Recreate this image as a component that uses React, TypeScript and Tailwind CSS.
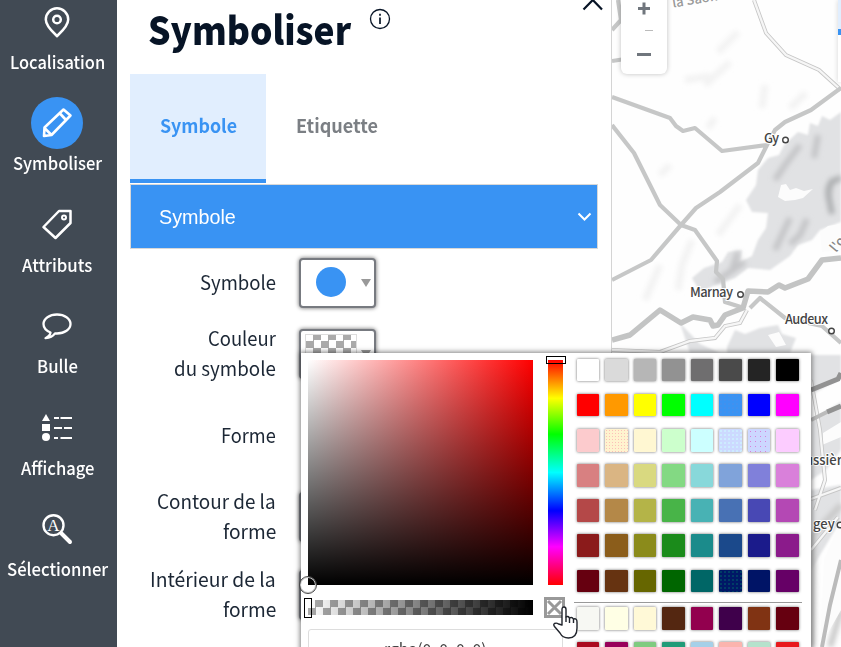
import { useLayoutEffect, useRef, useState } from "react";
import type { ReactNode } from "react";

/* Condenses or widens a line of text so that it takes up the given width. */
function Fit({ width, children }: { width: number; children: ReactNode }) {
  const ref = useRef<HTMLSpanElement>(null);
  const [scale, setScale] = useState(1);
  useLayoutEffect(() => {
    if (ref.current) setScale(width / ref.current.offsetWidth);
  }, [width]);
  return (
    <span className="inline-block whitespace-nowrap" style={{ width }}>
      <span ref={ref} className="inline-block origin-left" style={{ transform: `scaleX(${scale})` }}>
        {children}
      </span>
    </span>
  );
}

const PinIcon = () => (
  <svg width="30" height="32" viewBox="0 0 30 32" fill="none" stroke="#fff" strokeWidth="2.500">
    <path d="M15 30C12 27 3.800 20.500 3.800 13.500a11.200 11.200 0 0 1 22.400 0C26.200 20.500 18 27 15 30Z" />
    <circle cx="15" cy="13.500" r="3.800" />
  </svg>
);
const PencilIcon = () => (
  <svg width="32" height="32" viewBox="0 0 32 32" fill="none" stroke="#fff" strokeWidth="2.600" strokeLinejoin="round">
    <path d="M3 29 3.500 20.500 22.500 2.500 29.500 8.500 10.500 28Z M18.500 6l6.500 7 M4 21.500l6 6" />
    <path d="M2 30v-5l4 4.500Z" fill="#fff" stroke="none" />
  </svg>
);
const TagIcon = () => (
  <svg width="32" height="32" viewBox="0 0 32 32" fill="none" stroke="#fff" strokeWidth="2.500" strokeLinejoin="round">
    <path d="M18 2h11.500v12L14.500 29 2.500 18Z" />
    <circle cx="23" cy="8.500" r="2" strokeWidth="2" />
  </svg>
);
const BubbleIcon = () => (
  <svg width="32" height="32" viewBox="0 0 32 32" fill="none" stroke="#fff" strokeWidth="2.300" strokeLinejoin="round">
    <path d="M9.500 22.500C5 20.600 2.500 17.500 2.500 14 2.500 8.500 8.500 4.500 16 4.500S29.500 8.500 29.500 14 23.500 23.500 16 23.500q-1 0-2-.2Q11 27.500 4.500 28.200 9 26 9.500 22.500Z" />
  </svg>
);
const LegendIcon = () => (
  <svg width="32" height="32" viewBox="0 0 32 32" fill="#fff">
    <path d="M5 2 9 9H1Z" />
    <path d="M1 12h8v7H1z" />
    <circle cx="5" cy="25" r="4" />
    <path d="M13 5h5v2h-5z M19.500 5H31v2H19.500z M13 15h8v2h-8z M23 15h8v2h-8z M13 25h4v2h-4z M19.500 25H31v2H19.500z" />
  </svg>
);
const SearchIcon = () => (
  <svg width="32" height="32" viewBox="0 0 32 32" fill="none" stroke="#fff">
    <circle cx="12.500" cy="12.200" r="10" strokeWidth="2.400" />
    <path d="M20.500 20.500 29 29" strokeWidth="4" strokeLinecap="round" />
    <text x="12.500" y="17.500" textAnchor="middle" fill="#fff" stroke="none" className="font-['Liberation_Serif',serif] text-[17px]">A</text>
  </svg>
);

const menu = [
  { label: "Localisation", width: 95, icon: <PinIcon /> },
  { label: "Symboliser", width: 89, icon: <PencilIcon />, active: true },
  { label: "Attributs", width: 70, icon: <TagIcon /> },
  { label: "Bulle", width: 41, icon: <BubbleIcon /> },
  { label: "Affichage", width: 73, icon: <LegendIcon /> },
  { label: "Sélectionner", width: 101, icon: <SearchIcon /> },
];

function Sidebar() {
  return (
    <nav className="-mt-1 flex h-[651px] w-[117px] shrink-0 flex-col gap-[21.400px] bg-[#414a54] pr-[3px] text-white">
      {menu.map((m) => (
        <div key={m.label} className="flex flex-col items-center">
          <div className={`flex size-[52px] items-center justify-center rounded-full ${m.active ? "bg-[#3993f3]" : ""}`}>{m.icon}</div>
          <div className="h-7 text-[17.500px] leading-7 font-medium">
            <Fit width={m.width}>{m.label}</Fit>
          </div>
        </div>
      ))}
    </nav>
  );
}

const Arrow = () => <span className="h-0 w-0 border-x-[5px] border-t-[8px] border-x-transparent border-t-[#999]" />;

const boxStyle = "h-[50px] w-[77px] rounded-[4px] border-2 border-[#777a80] bg-white shadow-[0_0_4px_rgba(0,0,0,0.6)]";

function Row({ lines, className, children }: { lines: [string, number][]; className: string; children?: ReactNode }) {
  return (
    <div className={`flex items-center ${className}`}>
      <div className="flex w-[146px] flex-col items-end pb-[3px] text-[19.500px] leading-[29.500px] text-[#1c2735]">
        {lines.map(([t, w]) => (
          <Fit key={t} width={w}>{t}</Fit>
        ))}
      </div>
      <div className="ml-[23px]">{children}</div>
    </div>
  );
}

function Panel() {
  return (
    <main className="flex h-[647px] w-[495px] shrink-0 flex-col border-r border-[#d4d4d4] bg-white pl-[13px]">
      <header className="flex h-[74px] items-start pl-[18px]">
        <h1 className="text-[39px] leading-[56px] font-black text-[#071426]">
          <Fit width={203}>Symboliser</Fit>
        </h1>
        <svg className="mt-2 ml-[18px]" width="22" height="22" viewBox="0 0 22 22" fill="none" stroke="#071426">
          <circle cx="11" cy="11" r="9.500" strokeWidth="1.300" />
          <path d="M11 9.500v6.500M11 5.800v2" strokeWidth="1.700" />
        </svg>
        <svg className="ml-[191px]" width="22" height="12" viewBox="0 0 22 12" fill="none" stroke="#071426" strokeWidth="2.200">
          <path d="M1.500 9.500 10.800 0 20 9.500" />
        </svg>
      </header>
      <div className="flex h-[110px] text-[18.500px] font-semibold">
        <div className="flex h-[109px] w-[136px] items-center justify-center border-b-4 border-[#3993f3] bg-[#e1eefe] pb-[2px] text-[#3993f3]">
          <Fit width={77}>Symbole</Fit>
        </div>
        <div className="flex h-[105px] items-center pb-[2px] pl-[30px] text-[#7b7f84]">
          <Fit width={82}>Etiquette</Fit>
        </div>
      </div>
      <div className="flex h-[65px] w-[468px] shrink-0 items-center justify-between border border-[#d8d8d8] bg-[#3993f3] pr-[5px] pl-7 font-['Liberation_Sans',sans-serif] text-[20px] text-white">
        <Fit width={77}>Symbole</Fit>
        <svg width="15" height="10" viewBox="0 0 15 10" fill="none" stroke="#fff" strokeWidth="2">
          <path d="m1.500 1.500 6 6 6-6" />
        </svg>
      </div>
      <Row lines={[["Symbole", 76]]} className="mt-[9px] h-[50px]">
        <div className={`flex items-center pr-[3px] pl-[14.500px] ${boxStyle}`}>
          <span className="mr-auto mb-[3px] size-[30px] rounded-full bg-[#3993f3]" />
          <Arrow />
        </div>
      </Row>
      <Row lines={[["Couleur", 68], ["du symbole", 102]]} className="mt-[16px] h-[60px]">
        <div className={`flex items-center justify-between pr-[3px] pl-[4px] ${boxStyle}`}>
          <span className="h-10 w-[52px] border border-[#ddd] bg-[conic-gradient(#aaa_25%,#fff_0_50%,#aaa_0_75%,#fff_0)] bg-[length:15px_15px] bg-[position:0_-2px]" />
          <Arrow />
        </div>
      </Row>
      <Row lines={[["Forme", 55]]} className="mt-[35px] h-[34px]" />
      <Row lines={[["Contour de la", 119], ["forme", 53]]} className="mt-[33px] h-[62px]">
        <div className={boxStyle} />
      </Row>
      <Row lines={[["Intérieur de la", 126], ["forme", 53]]} className="mt-[16px] h-[62px]">
        <div className={boxStyle} />
      </Row>
    </main>
  );
}

const road = "M612 97 670 118 676 126 683 131 695 128 722 151 767 145 775 130 785 122 811 110 841 88 M612 125 634 153 655 195 660 205 681 225 695 230 717 261 716 272 723 279 725 302 744 308 M767 145 758 163 720 192 696 208 681 225 651 260 612 280 M750 308 760 298 785 318 822 326 841 343 M612 30 621 20 618 0 M612 61 625 59";
const mainRoad = "M612 340 630 335 660 310 681 323 693 317 710 320 713 326 718 325 725 315 743 308 748 291 768 292 779 285 785 288 808 279 822 260 841 258";
const lane = "M754 0 766 33 786 55 819 70 841 90 M612 350 660 352 690 341 715 338 725 326 740 323 747 310 M811 380 820 430 825 480 815 510 M811 499 841 488 M838 517 811 550";

function MapView() {
  return (
    <div className="relative h-[647px] w-[229px] shrink-0 overflow-hidden bg-[#fefefe]">
      <svg width="229" height="647" viewBox="612 0 229 647" fill="none">
        <defs>
          <filter id="relief" x="-10%" y="-10%" width="120%" height="120%"><feGaussianBlur stdDeviation="1.200" /></filter>
          <filter id="slope" x="-20%" y="-20%" width="140%" height="140%"><feGaussianBlur stdDeviation="2.500" /></filter>
        </defs>
        <g filter="url(#relief)" fill="#e1e2e4">
          <path d="M841 112 830 120 822 116 818 126 810 123 808 135 798 132 784 145 779 155 768 158 758 170 756 185 746 200 752 212 768 213 766 228 758 240 752 256 740 262 742 250 728 252 722 262 704 268 692 278 700 292 718 284 735 278 748 268 770 270 790 256 798 245 812 240 820 230 841 222Z" />
          <path d="M727 347 735 330 745 334 760 328 778 325 782 334 796 338 790 353H727Z M680 323 690 353H720L700 344Z M811 355H841V378L811 395Z M811 420 841 402V450L826 470 811 480Z M811 490 841 485V520L811 570Z" />
        </g>
        <g filter="url(#slope)">
          <path d="M800 145 785 165 775 180 M790 218 782 235 775 250 M807 219 800 235 790 244 M832 178 828 200 M818 135 814 158 M738 252 732 270 M715 282 745 262" stroke="#c4c5c7" strokeWidth="6" />
          <path d="M841 178Q825 182 829 198L832 214" stroke="#aeb0b2" strokeWidth="6" />
          <path d="M730 62 705 85 M738 32 718 52 M685 80 710 76 M740 205 718 235 M692 240 682 265 678 290 M660 265 645 300 M765 85 762 108 M806 93 790 108 M715 118 708 128 M670 165 660 175" stroke="#f3f3f3" strokeWidth="7" />
          <path d="M841 505 813 535 812 647 M841 610 830 647" stroke="#c8c8c8" strokeWidth="6" />
        </g>
        <path d="M781 185 786 184 790 190 796 188 804 191 813 189 803 198 795 200 785 201 778 197Z M820 232 828 226 841 224V250L822 252Z M768 335 779 332 786 345 776 347Z M823 433 841 422V437L822 445Z M824 560 841 520V610L820 647Z" fill="#fcfcfc" />
        <path d={lane} stroke="#c6c6c6" strokeWidth="4" />
        <path d={lane} stroke="#f6f6f6" strokeWidth="2.300" />
        <path d={road} stroke="#c6c7c7" strokeWidth="4.200" strokeLinejoin="round" />
        <path d={mainRoad} stroke="#c3c4c4" strokeWidth="5.500" strokeLinejoin="round" />
        <path d="M811 420 827 412 M841 560 830 605 822 647" stroke="#bbb" strokeWidth="4" />
        <path d="M811 390 838 379 841 373 M827 412 841 406" stroke="#929292" strokeWidth="5" />
        <g fill="#444" stroke="#fff" strokeWidth="2" paintOrder="stroke" className="font-['Noto_Sans_CJK_SC',sans-serif] text-[13px] font-medium">
          <text x="764" y="143" textLength="15">Gy</text>
          <text x="690" y="297" textLength="43">Marnay</text>
          <text x="785" y="324" textLength="43">Audeux</text>
          <text x="805" y="465">ussières</text>
          <text x="813" y="529">gey</text>
          <text x="673" y="7.500" fill="#999" transform="rotate(-9 673 7.500)">la Saône</text>
          <text x="836" y="253" fill="#888" transform="rotate(-50 836 253)">l'og</text>
        </g>
        <g fill="#fff" stroke="#444" strokeWidth="1.400">
          <circle cx="785.500" cy="140" r="2.800" />
          <circle cx="740.500" cy="294.500" r="2.800" />
          <circle cx="831.500" cy="331" r="2.800" />
          <circle cx="840" cy="525" r="2.800" />
        </g>
      </svg>
      <div className="absolute -top-4 left-[9px] h-[90px] w-[46px] rounded-[6px] bg-white shadow-[0_0_5px_rgba(0,0,0,0.25)]">
        <svg width="46" height="90" viewBox="0 0 46 90" fill="none" stroke="#70767d" strokeWidth="3">
          <path d="M17 24.500h12M23 18.500v12M16 70.500h14" />
          <path d="M24 46.500h8" stroke="#bbb" strokeWidth="1" />
        </svg>
      </div>
      <div className="absolute top-0 right-0 h-[82px] w-[3px] bg-white shadow-[0_0_5px_rgba(0,0,0,0.2)]">
        <div className="h-[35px] border-b-[6px] border-[#3993f3] bg-[#e1eefe]" />
      </div>
    </div>
  );
}

const palette = [
  "#ffffff #dadada #b6b6b6 #929292 #6f6e6f #4a4a4a #242424 #000000",
  "#ff0000 #ff9900 #ffff00 #00ff00 #00ffff #3993f3 #0000ff #ff00ff",
  "#fccbcd #fff3cf #fff7d2 #ccffcc #ccffff #ccd9ff #ccd7ff #fcccff",
  "#d88081 #dab583 #d9d980 #83d983 #88d8da #80a3da #8080da #d980da",
  "#b44848 #b48848 #b4b448 #48b448 #48b2b4 #4871b4 #4848b4 #b448b4",
  "#8b1b1b #8b5d1b #8b8b1b #1b8b1b #1b8b8b #1b498b #1b1b8b #8b1b8b",
  "#660010 #663311 #666600 #006600 #006666 #001866 #001466 #660066",
].map((r) => r.split(" "));
const recent = [
  "#f7f8f3 #ffffe5 #fff9d7 #542711 #92004e #3f004b #803313 #660010",
  "#aa0b20 #98005a #80cb80 #209b78 #a6d0e8 #fbb4ae #b5e2cc #e8191d",
].map((r) => r.split(" "));

/* Scattered pixels laid over the dithered colours, keyed by row and column. */
const dots: Record<string, string> = {
  "1-5": "bg-[radial-gradient(#5f87d8_0.4px,transparent_0.8px)] bg-[length:4px_4px]",
  "2-1": "bg-[radial-gradient(#fcc0b8_0.5px,transparent_0.9px)] bg-[length:3px_3px]",
  "2-5": "bg-[radial-gradient(#ccffff_0.5px,transparent_0.9px)] bg-[length:4px_4px]",
  "2-6": "bg-[radial-gradient(#d980da_0.4px,transparent_0.8px)] bg-[length:5px_5px]",
  "6-5": "bg-[radial-gradient(#006666_0.5px,transparent_0.9px)] bg-[length:4px_4px]",
};

function Swatches({ rows, group }: { rows: string[][]; group: string }) {
  return (
    <div className="flex flex-col gap-[12.550px]">
      {rows.map((r, i) => (
        <div key={i} className="flex gap-[5.900px]">
          {r.map((c, j) => (
            <span
              key={j}
              className={`size-[22.600px] shrink-0 rounded-[1px] shadow-[0_0_3px_rgba(0,0,0,0.6)] ${dots[`${group}${i}-${j}`] ?? ""}`}
              style={{ backgroundColor: c }}
            />
          ))}
        </div>
      ))}
    </div>
  );
}

function ColorPicker() {
  return (
    <div className="absolute top-[353px] left-[301px] flex h-[310px] w-[510px] bg-white pt-[7px] pl-[7px] shadow-[0_0_5px_1px_rgba(0,0,0,0.5)]">
      <div className="w-[255px] shrink-0">
        <div className="flex gap-[15px]">
          <div className="relative h-[225px] w-[225px] bg-[linear-gradient(to_top,#000,transparent),linear-gradient(to_right,#fff,#f00)]">
            <span className="absolute -bottom-[9px] -left-[9px] size-[18px] rounded-full border-[1.500px] border-[#444] shadow-[inset_0_0_0_1px_#ccc]" />
          </div>
          <div className="relative h-[225px] w-[15px] bg-[linear-gradient(#f00,#ff0_17%,#0f0_33%,#0ff_50%,#00f_67%,#f0f_83%,#f00)]">
            <span className="absolute -top-1 -left-[2px] h-2 w-5 border border-black" />
          </div>
        </div>
        <div className="mt-[12px] flex items-center gap-[11px]">
          <div className="relative h-[15px] w-[225px] shrink-0 bg-[linear-gradient(to_right,transparent,#000),conic-gradient(#aaa_25%,#fff_0_50%,#aaa_0_75%,#fff_0)] bg-[length:100%_100%,15px_15px]">
            <span className="absolute -top-[2px] -left-1 h-5 w-2 border border-black" />
          </div>
          <svg className="shrink-0" width="21" height="21" viewBox="0 0 21 21" fill="#fff" stroke="#999" strokeWidth="3">
            <path d="M1.500 1.500h18v18h-18z M4 4l13 13M17 4 4 17" />
          </svg>
        </div>
        <div className="mt-[11px] h-[40px] rounded-[3px] border border-[#ddd] pt-[5px] text-center text-[17px] leading-[28px] text-[#444]">
          <Fit width={103}>rgba(0, 0, 0, 0)</Fit>
        </div>
      </div>
      <div className="-mt-[1.300px] ml-[11px] w-[228px] shrink-0">
        <div className="pl-[2.800px]"><Swatches rows={palette} group="" /></div>
        <div className="mt-[9.800px] mb-[4px] h-px bg-[#999]" />
        <div className="pl-[2.800px]"><Swatches rows={recent} group="recent-" /></div>
      </div>
    </div>
  );
}

export default function App() {
  return (
    <div className="relative flex h-[647px] w-[841px] overflow-hidden bg-white font-['Noto_Sans_CJK_SC',sans-serif]">
      <Sidebar />
      <Panel />
      <MapView />
      <ColorPicker />
      <svg className="absolute top-[606px] left-[552px]" width="28" height="34" viewBox="0 0 28 34" fill="#fff" stroke="#20242c" strokeWidth="1.400" strokeLinejoin="round">
        <path d="M10 19V3.500q0-2.500 2-2.500t2 2.500V11q2-1.500 3.500 1 2.500-1.500 4 1 3.500-1 3.500 3v6q0 10-8.500 10-6 0-8.500-5L2.500 20.500q-1.500-2 0-3 2-1 4 .5Z" />
        <path d="M14 10.500V16M17.500 12v5M21.500 13v4" fill="none" />
      </svg>
    </div>
  );
}
